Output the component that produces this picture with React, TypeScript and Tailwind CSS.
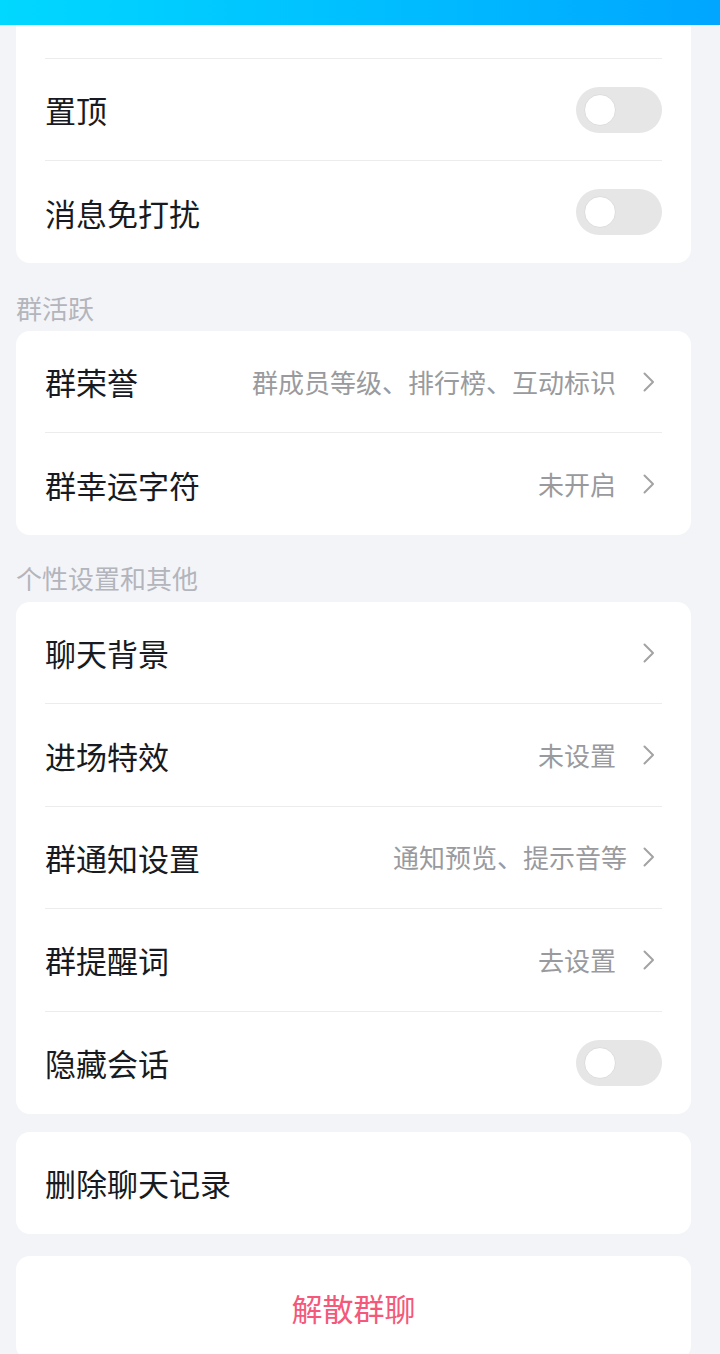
import React from 'react';

const font = { fontFamily: '"Noto Sans CJK SC", "Noto Sans", sans-serif' };

const Chevron: React.FC = () => (
  <svg width="14" height="22" viewBox="0 0 14 22" fill="none" className="shrink-0">
    <path d="M2.5 2.5 L11 11 L2.5 19.5" stroke="#a3a3a3" strokeWidth="2" strokeLinecap="round" strokeLinejoin="round" />
  </svg>
);

const Toggle: React.FC = () => (
  <div className="w-[86px] h-[46px] rounded-full bg-[#e6e6e6] flex items-center px-[8px]">
    <div className="w-[32px] h-[32px] rounded-full bg-white border border-[#dcdcdc]" />
  </div>
);

type RowProps = {
  title: string;
  value?: string;
  arrow?: boolean;
  toggle?: boolean;
  last?: boolean;
  valueClass?: string;
  heightClass?: string;
};

const Row: React.FC<RowProps> = ({ title, value, arrow, toggle, last, valueClass, heightClass }) => (
  <div className={`${heightClass ?? 'h-[102px]'} flex items-center mx-[29px] ${last ? '' : 'border-b border-[#ececec]'}`}>
    <span className="text-[31px] text-[#181a22] leading-none flex-1">{title}</span>
    {value && (
      <span className={`text-[26px] text-[#999a9e] leading-none ${valueClass ?? 'mr-[26px]'}`}>{value}</span>
    )}
    {arrow && (
      <div className="mr-[6px]">
        <Chevron />
      </div>
    )}
    {toggle && <Toggle />}
  </div>
);

const Card: React.FC<{ children: React.ReactNode; className?: string }> = ({ children, className }) => (
  <div className={`bg-white rounded-[14px] ml-[16px] mr-[29px] ${className ?? ''}`}>{children}</div>
);

const Label: React.FC<{ text: string; className?: string }> = ({ text, className }) => (
  <div className={`px-[16px] flex items-end pb-[10px] text-[26px] text-[#b3b5bc] leading-none ${className ?? 'h-[68px]'}`}>{text}</div>
);

export default function App() {
  return (
    <div className="w-[720px] h-[1354px] bg-[#f3f4f8] overflow-hidden relative" style={font}>
      <div className="absolute top-0 left-0 right-0 h-[25px] bg-gradient-to-r from-[#00d8ff] to-[#00a6ff] z-10" />

      <div className="pt-[25px]">
        <Card className="rounded-t-none">
          <div className="h-[34px] mx-[29px] border-b border-[#ececec]" />
          <Row title="置顶" toggle />
          <Row title="消息免打扰" toggle last />
        </Card>

        <Label text="群活跃" />
        <Card>
          <Row title="群荣誉" value="群成员等级、排行榜、互动标识" arrow />
          <Row title="群幸运字符" value="未开启" arrow last />
        </Card>

        <Label text="个性设置和其他" className="h-[67px] pb-[11px]" />
        <Card>
          <Row title="聊天背景" arrow heightClass="h-[102.4px]" />
          <Row title="进场特效" value="未设置" arrow heightClass="h-[102.4px]" />
          <Row title="群通知设置" value="通知预览、提示音等" arrow valueClass="mr-[15px]" heightClass="h-[102.4px]" />
          <Row title="群提醒词" value="去设置" arrow heightClass="h-[102.4px]" />
          <Row title="隐藏会话" toggle last heightClass="h-[102.4px]" />
        </Card>

        <Card className="mt-[18px]">
          <Row title="删除聊天记录" last />
        </Card>

        <Card className="mt-[22px]">
          <div className="h-[104px] flex items-center justify-center text-[31px] text-[#f4587a] leading-none">解散群聊</div>
        </Card>
      </div>
    </div>
  );
}
